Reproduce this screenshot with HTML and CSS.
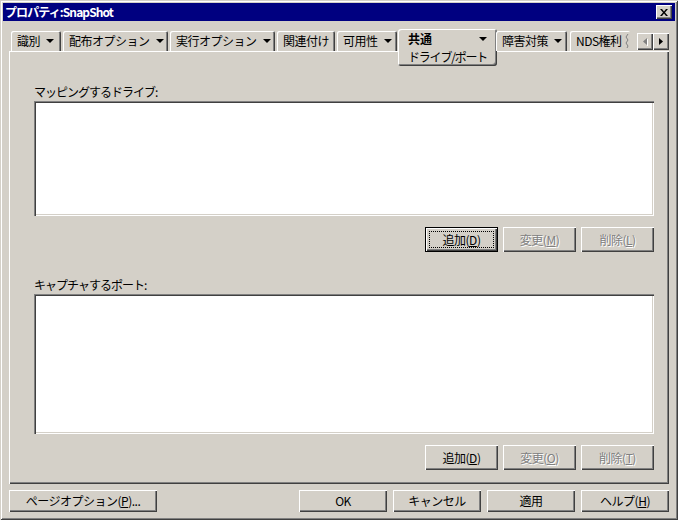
FILE: index.html
```html
<!DOCTYPE html>
<html lang="ja">
<head>
	<meta charset="UTF-8">
	<title>プロパティ:SnapShot</title>
	<link rel="stylesheet" href="styles.css">
</head>
<body>
	<div class="window">
		<div class="titlebar">
			<span class="title">プロパティ:SnapShot</span>
			<span class="close">
				<svg width="8" height="7" viewBox="0 0 8 7"><path d="M0 0h2l2 2.5L6 0h2L5 3.5 8 7H6L4 4.5 2 7H0l3-3.5z" fill="#000"/></svg>
			</span>
		</div>

		<div class="tabs">
			<div class="tab w1">識別<i class="arrow"></i></div>
			<div class="tab w2">配布オプション<i class="arrow"></i></div>
			<div class="tab w2">実行オプション<i class="arrow"></i></div>
			<div class="tab w4">関連付け</div>
			<div class="tab w5">可用性<i class="arrow"></i></div>
			<div class="tab selected">
				<div class="sel-top"><b>共通</b><i class="arrow"></i></div>
				<div class="sel-sub">ドライブ/ポート</div>
			</div>
			<div class="tab w7">障害対策<i class="arrow"></i></div>
			<div class="tab nds">NDS権利
				<svg class="zig" width="4" height="14" viewBox="0 0 4 14"><path d="M3 0L1 3l2 3-2 3 2 3-1 2" fill="none" stroke="#808080"/></svg>
			</div>
			<div class="scroller">
				<span class="sbtn"><svg width="5" height="8" viewBox="0 0 5 8"><path d="M4 0v7L0 3.5z" fill="#808080"/><path d="M4.5 1v7" stroke="#fff"/></svg></span>
				<span class="sbtn"><svg width="4" height="7" viewBox="0 0 4 7"><path d="M0 0v7l4-3.5z" fill="#000"/></svg></span>
			</div>
		</div>

		<div class="panel">
			<div class="label">マッピングするドライブ:</div>
			<div class="listbox drives"></div>
			<div class="btnrow">
				<button class="btn default"><span>追加(<u>D</u>)</span></button>
				<button class="btn off">変更(<u>M</u>)</button>
				<button class="btn off">削除(<u>L</u>)</button>
			</div>

			<div class="label second">キャプチャするポート:</div>
			<div class="listbox ports"></div>
			<div class="btnrow">
				<button class="btn">追加(<u>D</u>)</button>
				<button class="btn off">変更(<u>O</u>)</button>
				<button class="btn off">削除(<u>T</u>)</button>
			</div>
		</div>

		<div class="footer">
			<button class="btn wide">ページオプション(<u>P</u>)...</button>
			<div class="right">
				<button class="btn big">OK</button>
				<button class="btn big">キャンセル</button>
				<button class="btn big">適用</button>
				<button class="btn big">ヘルプ(<u>H</u>)</button>
			</div>
		</div>
	</div>
</body>
</html>
```

FILE: styles.css
```css
*{margin: 0;padding: 0;box-sizing: border-box;}
body{
	background: #d4d0c8;
	font: 12px/14px "Noto Sans CJK JP", "MS UI Gothic", sans-serif;
	color: #000;
}
.window{
	width: 678px;
	height: 520px;
	padding: 3px;
	background: #d4d0c8;
	box-shadow: inset 1px 1px #d4d0c8, inset -1px -1px #404040, inset 2px 2px #fff, inset -2px -2px #808080;
}

/* title bar */
.titlebar{
	height: 18px;
	background: #000080;
	display: flex;
	align-items: center;
	justify-content: space-between;
	padding: 0 3px 0 2px;
}
.title{
	color: #fff;
	font-weight: bold;
	letter-spacing: -0.9px;
}
.close{
	width: 16px;
	height: 14px;
	background: #d4d0c8;
	display: flex;
	align-items: center;
	justify-content: center;
	box-shadow: inset 1px 1px #fff, inset -1px -1px #404040, inset -2px -2px #808080;
}

/* tabs */
.tabs{
	display: flex;
	align-items: flex-start;
	height: 22px;
	margin: 8px 0 0 8px;
	width: 658px;
	position: relative;
	z-index: 2;
}
.tab{
	height: 20px;
	margin-top: 2px;
	margin-right: 2px;
	padding-left: 6px;
	display: flex;
	align-items: center;
	white-space: nowrap;
	letter-spacing: -0.5px;
	border-radius: 2px 2px 0 0;
	box-shadow: inset 1px 1px #fff, inset -1px 0 #404040, inset -2px 0 #808080;
}
.w1{width: 50px;}
.w2{width: 105px;}
.w4{width: 58px;}
.w5{width: 60px;margin-right: 1px;}
.w7{width: 71px;margin-right: 3px;margin-left: -1px;}
.nds{
	width: 60px;
	box-shadow: inset 1px 1px #fff;
}
.zig{margin-left: 3px;}
.arrow{
	display: inline-block;
	width: 0;
	height: 0;
	border-left: 4px solid transparent;
	border-right: 4px solid transparent;
	border-top: 4px solid #000;
	margin-left: 6px;
}
.selected{
	width: 99px;
	height: 37px;
	margin-top: 0;
	margin-right: 0;
	padding: 3px 0 0 10px;
	flex-direction: column;
	align-items: stretch;
	background: #d4d0c8;
	border-radius: 3px;
	line-height: 13px;
	box-shadow: inset 1px 1px #fff, inset -1px -1px #404040, inset -2px -2px #808080;
}
.sel-top{
	display: flex;
	align-items: center;
	justify-content: space-between;
	padding-right: 10px;
	height: 13px;
}
.sel-top b{letter-spacing: 0;}
.sel-sub{margin-top: 5px;letter-spacing: -1.2px;}
.scroller{
	display: flex;
	margin: 4px 0 0 auto;
}
.sbtn{
	width: 16px;
	height: 17px;
	display: flex;
	align-items: center;
	justify-content: center;
	box-shadow: inset 1px 1px #fff, inset -1px -1px #404040, inset -2px -2px #808080;
}

/* panel */
.panel{
	width: 660px;
	height: 433px;
	margin-left: 6px;
	padding: 34px 15px 0 25px;
	box-shadow: inset 1px 1px #fff, inset -1px -1px #404040, inset -2px -2px #808080;
}
.label{
	height: 14px;
	margin-bottom: 2px;
	letter-spacing: -1px;
}
.label.second{margin-top: 26px;}
.listbox{
	background: #fff;
	box-shadow: inset 1px 1px #808080, inset 2px 2px #404040, inset -1px -1px #fff, inset -2px -2px #d4d0c8;
}
.drives{height: 115px;}
.ports{height: 140px;}
.btnrow{
	display: flex;
	justify-content: flex-end;
	gap: 5px;
	margin-top: 11px;
}

/* buttons */
.btn{
	width: 73px;
	height: 25px;
	border: none;
	background: #d4d0c8;
	font: inherit;
	letter-spacing: -0.5px;
	color: #000;
	position: relative;
	box-shadow: inset 1px 1px #fff, inset -1px -1px #404040, inset -2px -2px #808080;
}
.btn u{text-decoration: underline;}
.btn.default{
	box-shadow: inset 0 0 0 1px #000, inset 2px 2px #fff, inset -2px -2px #404040, inset -3px -3px #808080;
}
.btn.default:after{
	content: "";
	position: absolute;
	left: 4px;
	top: 4px;
	right: 4px;
	bottom: 4px;
	border: 1px dotted #000;
}
.btn.off{
	color: #808080;
	text-shadow: 1px 1px #fff;
}

/* footer */
.footer{
	display: flex;
	justify-content: space-between;
	margin: 6px 0 0 6px;
	width: 660px;
}
.footer .right{
	display: flex;
	gap: 6px;
}
.btn.wide{width: 148px;height: 22px;}
.btn.big{width: 88px;height: 22px;}
```
